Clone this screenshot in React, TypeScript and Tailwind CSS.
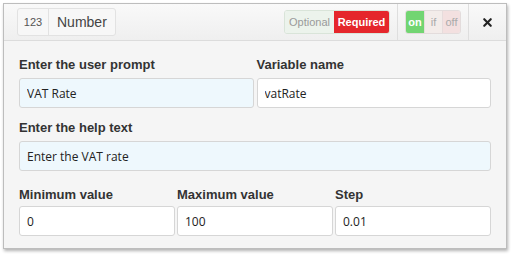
import { X } from "lucide-react";

const label = "block text-[13px] leading-4 font-bold text-[#333] font-['Liberation_Sans',Arial,sans-serif]";
const input =
  "w-full h-[30px] rounded-[3px] border border-[#d6d6d6] px-[7px] text-[12px] text-[#222] font-['Open_Sans',sans-serif] outline-none";

function Field({ title, value, tint, mb = "mb-[5px]" }: { title: string; value: string; tint?: boolean; mb?: string }) {
  return (
    <div className="min-w-0">
      <label className={`${label} ${mb}`}>{title}</label>
      <input
        readOnly
        value={value}
        className={`${input} ${tint ? "bg-[#eef8fd] border-[#d3e3ea]" : "bg-white"}`}
      />
    </div>
  );
}

export default function App() {
  return (
    <div className="w-[513px] h-[256px] bg-white pt-[3px] pl-[3px] font-['Liberation_Sans',Arial,sans-serif]">
      <div className="w-[504px] h-[246px] border border-[#bdbdbd] bg-[#f5f5f5] shadow-[1px_2px_3px_rgba(0,0,0,0.3)] flex flex-col">
        {/* Header */}
        <div className="h-[37px] border-b border-[#dcdcdc] bg-gradient-to-b from-[#f9f9f9] to-[#efefef] flex items-stretch">
          <div className="flex items-center pl-[13px] flex-1">
            <div className="h-[28px] flex items-stretch rounded-[3px] border border-[#e2e2e2] bg-[#f7f7f7]">
              <span className="w-[31px] border-r border-[#e2e2e2] flex items-center justify-center text-[11px] text-[#555]">123</span>
              <span className="px-[8px] flex items-center text-[14px] text-[#444]">Number</span>
            </div>
          </div>
          <div className="flex items-center pr-[7px]">
            <div className="h-[24px] flex rounded-[3px] overflow-hidden border border-[#d9e4d9] text-[11px]">
              <span className="w-[49px] bg-[#ecf3ec] text-[#9a9a9a] flex items-center justify-center">Optional</span>
              <span className="w-[55px] bg-[#e5262b] text-white font-bold flex items-center justify-center">Required</span>
            </div>
          </div>
          <div className="w-px bg-[#dedede]" />
          <div className="flex items-center pl-[7px] pr-[7px]">
            <div className="h-[24px] flex rounded-[3px] overflow-hidden border border-[#e3dcdc] text-[11px]">
              <span className="w-[18px] bg-[#72d572] text-white font-bold flex items-center justify-center">on</span>
              <span className="w-[18px] bg-[#f3ecea] text-[#aaa] flex items-center justify-center border-l border-[#e6dcdc]">if</span>
              <span className="w-[18px] bg-[#f3e0e0] text-[#aaa] flex items-center justify-center border-l border-[#e6dcdc]">off</span>
            </div>
          </div>
          <div className="w-px bg-[#dedede]" />
          <div className="w-[37px] flex items-center justify-center">
            <X size={13} strokeWidth={4} className="text-[#222]" />
          </div>
        </div>

        {/* Body */}
        <div className="pt-[16px] px-[15px]">
          <div className="grid grid-cols-2 gap-[3px]">
            <Field title="Enter the user prompt" value="VAT Rate" tint />
            <Field title="Variable name" value="vatRate" />
          </div>
          <div className="mt-[12px]">
            <Field title="Enter the help text" value="Enter the VAT rate" tint />
          </div>
          <div className="mt-[16px] grid grid-cols-3 gap-[2px]">
            <Field title="Minimum value" value="0" mb="mb-[3px]" />
            <Field title="Maximum value" value="100" mb="mb-[3px]" />
            <Field title="Step" value="0.01" mb="mb-[3px]" />
          </div>
        </div>
      </div>
    </div>
  );
}
